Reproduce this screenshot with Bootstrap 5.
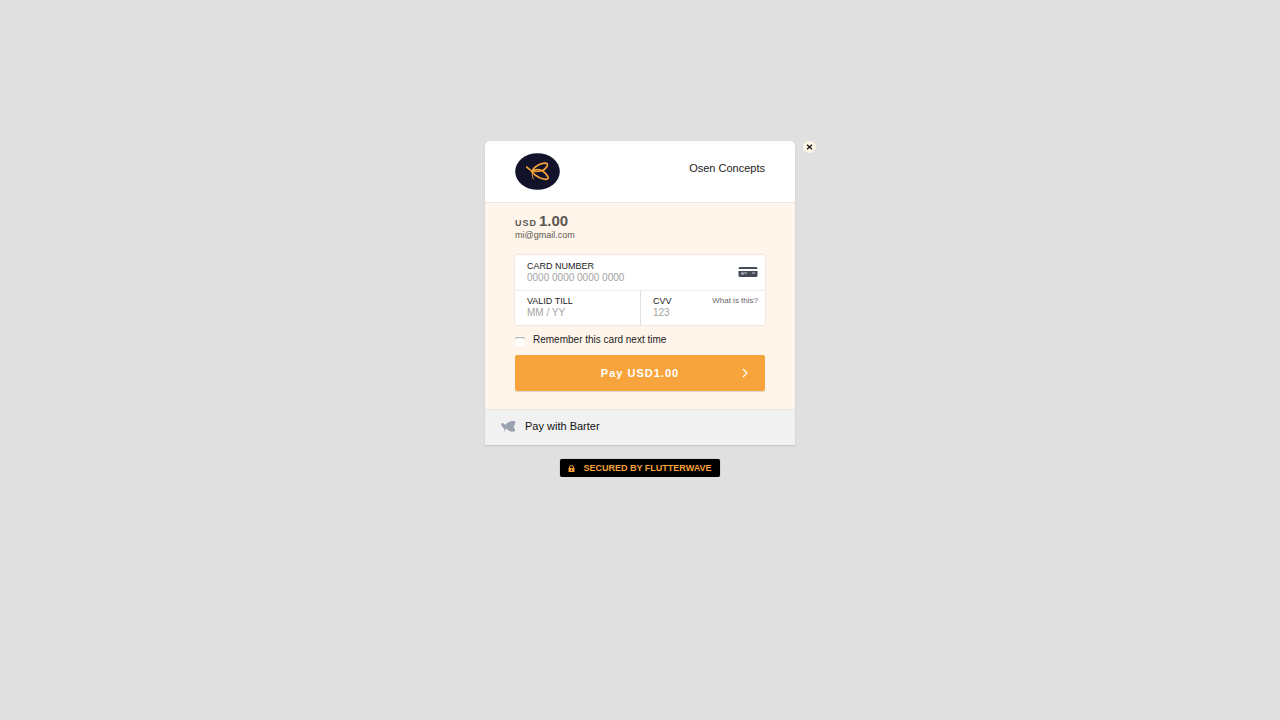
<!DOCTYPE html>
<html lang="en">
<head>
<meta charset="utf-8">
<meta name="viewport" content="width=device-width, initial-scale=1">
<title>Osen Concepts checkout</title>
<link href="https://cdn.jsdelivr.net/npm/bootstrap@5.3.0/dist/css/bootstrap.min.css" rel="stylesheet">
<style>
body{background:#e0e0e0;font-family:"Liberation Sans",Arial,sans-serif;font-size:11px;line-height:14px;color:#222}
.checkout{padding-top:141px}
.pay-box{width:100%;max-width:310px;box-shadow:0 1px 2px #0002;border-radius:5px 5px 0 0}
.pay-head{background:#fff;border-radius:5px 5px 0 0;padding:12px 30px;border-bottom:1px solid #ece8e4}
.pay-body{background:#fff5ea;padding:10px 30px 18px}
.pay-foot{background:#f1f1f1;border-top:1px solid #e5e3e0;padding:9px 15px 12px;font-size:11px;color:#111;text-decoration:none}
.close-btn{top:0;right:-21px;width:13px;height:12px;border-radius:50%;background:#fff5e6}
.cur{font-size:9px;letter-spacing:1px}
.amount{gap:2px}
.sum{font-size:15px;line-height:16px}
.muted{color:#5b5753}
.mail{font-size:9px;line-height:11px}
.fields{background:#fff;border-radius:2px;box-shadow:0 0 2px #0003;margin-top:14px}
.field{padding:4px 7px 6px 12px;height:35px}
.field label,.help{font-size:9px;line-height:12px;display:block;color:#222}
.field .help{font-size:8px;color:#666}
.field input{border:0;outline:0;padding:0;background:none;width:100%;font-size:10px;line-height:12px;height:12px;display:block;color:#333}
.field input::placeholder{color:#a3a3a3;opacity:1}
.rule-top{border-top:1px solid #eee}
.rule-top .field{height:34px}
.rule-left{border-left:1px solid #e2e0dc}
.remember{margin-top:8px;font-size:10px;color:#222}
.remember input{appearance:none;width:10px;height:9px;margin:4px 0 0;background:#fff;border-radius:2px;box-shadow:inset 0 1px 1px #0005}
.remember input:checked{background:#f6a43c}
.pay-btn{background:#f7a43d;color:#fff;border:0;border-radius:2px;height:36px;margin-top:8px;font-size:11px;letter-spacing:1px;box-shadow:0 1px 1px #0002}
.pay-btn svg{right:17px;top:13px}
.secured{background:#000;color:#f6a13a;border-radius:2px;margin-top:14px;padding:2px 8px;font-size:9px;line-height:14px;box-shadow:0 0 1px #0008}
</style>
</head>
<body>
<main class="checkout d-flex flex-column align-items-center">
  <section class="pay-box position-relative">
    <button type="button" class="close-btn position-absolute border-0 p-0 d-flex align-items-center justify-content-center" aria-label="Close">
      <svg width="7" height="6" viewBox="0 0 7 6"><path d="M1 .7 6 5.3M6 .7 1 5.3" stroke="#111" stroke-width="1.2"/></svg>
    </button>
    <header class="pay-head d-flex justify-content-between">
      <svg width="45" height="37" viewBox="0 0 45 37" aria-hidden="true">
        <ellipse cx="22.5" cy="18.5" rx="22.3" ry="18.3" fill="#12122b"/>
        <g fill="none" stroke="#f5a23b" stroke-width="1.7" stroke-linecap="round" stroke-linejoin="round">
          <path d="M17 18C20 12.500 27 9.500 31.500 10.300C34 11.500 31 16 27.500 17.500C24 18.700 20 18.500 17 18.500"/>
          <path d="M17 18.500C20 16 25 15.800 28 18.200C32.500 21.500 34.500 25.500 32 26.200C27.500 27 20.500 23.500 17 19"/>
          <path d="M17 18.500C15 16.500 13.500 16 11.800 14"/>
          <path d="M17.500 20C17 22.500 17.500 24 18.300 26" stroke-width="1"/>
        </g>
      </svg>
      <div class="pt-2">Osen Concepts</div>
    </header>
    <form class="pay-body" onsubmit="return false">
      <div class="amount muted fw-bold d-flex align-items-baseline"><span class="cur">USD</span><span class="sum">1.00</span></div>
      <div class="muted mail">mi@gmail.com</div>
      <div class="fields">
        <div class="field d-flex align-items-center justify-content-between">
          <div class="flex-fill">
            <label for="num">CARD NUMBER</label>
            <input id="num" placeholder="0000 0000 0000 0000">
          </div>
          <svg width="20" height="10" viewBox="0 0 20 10" aria-hidden="true">
            <path fill="#454a59" d="M2 0H18Q19.500 0 19.500 1.500V2H.5V1.500Q.5 0 2 0ZM.5 4H19.500V8.500Q19.500 10 18 10H2Q.5 10 .5 8.500Z"/>
            <path d="M3 6H9M3 7H6M14 6H17" stroke="#c4c6cc"/>
          </svg>
        </div>
        <div class="row g-0 rule-top">
          <div class="col-6 field"><label for="exp">VALID TILL</label><input id="exp" placeholder="MM / YY"></div>
          <div class="col-6 field rule-left">
            <div class="d-flex justify-content-between"><label for="cvv">CVV</label><a href="#" class="help text-decoration-none">What is this?</a></div>
            <input id="cvv" placeholder="123">
          </div>
        </div>
      </div>
      <div class="remember d-flex gap-2"><input type="checkbox" id="keep"><label for="keep">Remember this card next time</label></div>
      <button type="submit" class="pay-btn w-100 fw-bold position-relative">Pay USD1.00
        <svg class="position-absolute" width="6" height="10" viewBox="0 0 6 10"><path d="M1 1 5 5 1 9" fill="none" stroke="#fff" stroke-width="1.200"/></svg>
      </button>
    </form>
    <a href="#" class="pay-foot d-flex align-items-center">
      <svg class="me-2" width="17" height="13" viewBox="0 0 16 13" aria-hidden="true"><path fill="#98a1ad" d="M.5 3.500C2 3 3.500 3.500 5 5C7 2 11 .5 14 1Q16 2 13.500 6Q12.500 6.500 14 8.500C15.500 11 14 12 12.500 11.500C10 12 7.500 10.500 5.500 8.500L4 12 3.800 8.500C2 8 1 6 .5 3.500Z"/></svg>
      <span>Pay with Barter</span>
    </a>
  </section>
  <div class="secured fw-bold d-flex align-items-center">
    <svg width="7" height="7" viewBox="0 0 7 7" aria-hidden="true"><path d="M1.500 3V2Q1.500 .6 3.500 .6T5.500 2V3" fill="none" stroke="#f6a13a"/><path fill="#f6a13a" d="M.5 3H6.500V7H.5Z"/><path d="M3.500 4V6" stroke="#432"/></svg>
    <span class="ms-2">SECURED BY FLUTTERWAVE</span>
  </div>
</main>
<script src="https://cdn.jsdelivr.net/npm/bootstrap@5.3.0/dist/js/bootstrap.bundle.min.js"></script>
</body>
</html>
